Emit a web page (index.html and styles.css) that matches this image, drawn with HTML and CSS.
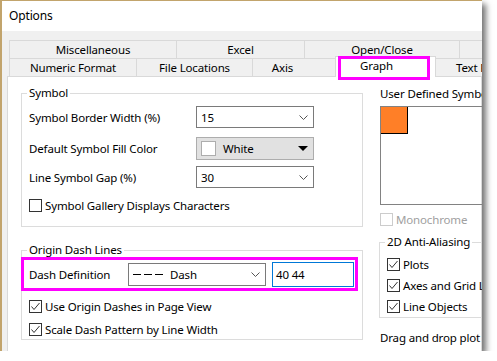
FILE: index.html
```html
<!DOCTYPE html>
<html lang="en">
<head>
    <meta charset="UTF-8">
    <title>Options</title>
    <link rel="stylesheet" href="styles.css">
</head>
<body>
    <div class="window">
        <div class="titlebar">Options</div>

        <div class="dialog">
            <!-- Tab strip, two rows -->
            <div class="tabs">
                <div class="tab-row">
                    <div class="tab tab-misc">Miscellaneous</div>
                    <div class="tab tab-excel">Excel</div>
                    <div class="tab tab-open">Open/Close</div>
                    <div class="tab tab-more"></div>
                </div>
                <div class="tab-row">
                    <div class="tab tab-numeric">Numeric Format</div>
                    <div class="tab tab-files">File Locations</div>
                    <div class="tab tab-axis">Axis</div>
                    <div class="tab tab-graph selected">Graph<span class="callout"></span></div>
                    <div class="tab tab-text">Text Font</div>
                </div>
            </div>

            <div class="panel">
                <div class="col-left">
                    <fieldset class="group group-symbol">
                        <legend>Symbol</legend>
                        <div class="field-row row-border">
                            <span class="field-label">Symbol Border Width (%)</span>
                            <div class="combo">
                                <span class="combo-value">15</span>
                                <svg class="chevron" width="9" height="5" viewBox="0 0 9 5"><polyline points="0.5,0.5 4.5,4.5 8.5,0.5" fill="none" stroke="#555" stroke-width="1"/></svg>
                            </div>
                        </div>
                        <div class="field-row row-fill">
                            <span class="field-label">Default Symbol Fill Color</span>
                            <div class="color-button">
                                <span class="swatch"></span>
                                <span class="color-name">White</span>
                                <svg class="arrow" width="10" height="5" viewBox="0 0 10 5"><polygon points="0,0 10,0 5,5" fill="#000"/></svg>
                            </div>
                        </div>
                        <div class="field-row row-gap">
                            <span class="field-label">Line Symbol Gap (%)</span>
                            <div class="combo">
                                <span class="combo-value">30</span>
                                <svg class="chevron" width="9" height="5" viewBox="0 0 9 5"><polyline points="0.5,0.5 4.5,4.5 8.5,0.5" fill="none" stroke="#555" stroke-width="1"/></svg>
                            </div>
                        </div>
                        <div class="check-row">
                            <span class="checkbox"></span>
                            <span>Symbol Gallery Displays Characters</span>
                        </div>
                    </fieldset>

                    <fieldset class="group group-dash">
                        <legend>Origin Dash Lines</legend>
                        <div class="dash-row">
                            <span class="dash-label">Dash Definition</span>
                            <div class="combo combo-dash">
                                <svg class="dash-preview" width="30" height="3" viewBox="0 0 30 3"><line x1="0" y1="1.5" x2="30" y2="1.5" stroke="#000" stroke-width="1" stroke-dasharray="8 3"/></svg>
                                <span class="combo-value">Dash</span>
                                <svg class="chevron" width="9" height="5" viewBox="0 0 9 5"><polyline points="0.5,0.5 4.5,4.5 8.5,0.5" fill="none" stroke="#555" stroke-width="1"/></svg>
                            </div>
                            <div class="textbox">40 44</div>
                        </div>
                        <div class="check-row row-use">
                            <span class="checkbox"><svg width="11" height="11" viewBox="0 0 11 11"><polyline points="1.5,5.5 4,8.5 9.5,2" fill="none" stroke="#333" stroke-width="1"/></svg></span>
                            <span>Use Origin Dashes in Page View</span>
                        </div>
                        <div class="check-row row-scale">
                            <span class="checkbox"><svg width="11" height="11" viewBox="0 0 11 11"><polyline points="1.5,5.5 4,8.5 9.5,2" fill="none" stroke="#333" stroke-width="1"/></svg></span>
                            <span>Scale Dash Pattern by Line Width</span>
                        </div>
                    </fieldset>
                </div>

                <div class="col-right">
                    <div class="symbols-label">User Defined Symbols</div>
                    <div class="symbols-box">
                        <span class="symbol-cell"></span>
                    </div>
                    <div class="check-row disabled row-mono">
                        <span class="checkbox"></span>
                        <span>Monochrome</span>
                    </div>

                    <fieldset class="group group-aa">
                        <legend>2D Anti-Aliasing</legend>
                        <div class="check-row">
                            <span class="checkbox"><svg width="11" height="11" viewBox="0 0 11 11"><polyline points="1.5,5.5 4,8.5 9.5,2" fill="none" stroke="#333" stroke-width="1"/></svg></span>
                            <span>Plots</span>
                        </div>
                        <div class="check-row">
                            <span class="checkbox"><svg width="11" height="11" viewBox="0 0 11 11"><polyline points="1.5,5.5 4,8.5 9.5,2" fill="none" stroke="#333" stroke-width="1"/></svg></span>
                            <span>Axes and Grid Lines</span>
                        </div>
                        <div class="check-row">
                            <span class="checkbox"><svg width="11" height="11" viewBox="0 0 11 11"><polyline points="1.5,5.5 4,8.5 9.5,2" fill="none" stroke="#333" stroke-width="1"/></svg></span>
                            <span>Line Objects</span>
                        </div>
                    </fieldset>

                    <div class="drag-note">Drag and drop plot settings</div>
                </div>
            </div>
        </div>
    </div>
</body>
</html>
```

FILE: styles.css
```css
body {
    margin: 0;
    background-color: #ffffff;
    font-family: "Noto Sans", "Open Sans", sans-serif;
    font-size: 11.5px;
    letter-spacing: -0.15px;
    color: #000000;
}

.window {
    box-sizing: border-box;
    width: 482px;
    height: 351px;
    border-left: 2px solid #c2a46c;
    border-top: 1px solid #c2a46c;
    background-color: #f0f0f0;
    overflow: hidden;
    box-shadow: 4px 4px 6px rgba(0, 0, 0, 0.55);
    white-space: nowrap;
}

.titlebar {
    height: 30px;
    line-height: 30px;
    padding-left: 7px;
    font-size: 12px;
    background-color: #ffffff;
}

.dialog {
    padding: 9px 0 0 5px;
}

/* Tabs */

.tabs {
    margin-left: 2px;
}

.tab-row {
    display: flex;
    height: 18px;
}

.tab {
    box-sizing: border-box;
    flex-shrink: 0;
    height: 18px;
    line-height: 18px;
    border: 1px solid #d9d9d9;
    border-bottom: none;
    margin-right: -1px;
    text-align: center;
    background-color: #f0f0f0;
}

.tab-misc { width: 168px; }
.tab-excel { width: 129px; }
.tab-open { width: 156px; }
.tab-more { width: 60px; }

.tab-numeric { width: 128px; }
.tab-files { width: 117px; }
.tab-axis { width: 85px; padding-right: 24px; }
.tab-graph { width: 101px; }
.tab-text { width: 80px; text-align: left; padding-left: 20px; }

.tab.selected {
    position: relative;
    z-index: 1;
    height: 21px;
    margin-top: -2px;
    margin-left: -1px;
    line-height: 17px;
    padding-right: 18px;
    background-color: #ffffff;
}

.callout {
    position: absolute;
    left: 2px;
    top: -1px;
    width: 92px;
    height: 24px;
    box-sizing: border-box;
    border: 3px solid #ff00ff;
}

/* Page */

.panel {
    display: flex;
    gap: 17px;
    height: 300px;
    margin-top: 0;
    padding: 8px 0 0 13px;
    border: 1px solid #d9d9d9;
    background-color: #ffffff;
}

.col-left {
    width: 342px;
    flex-shrink: 0;
}

.col-right {
    width: 140px;
    flex-shrink: 0;
}

.group {
    margin: 0;
    padding: 5px 0 10px 7px;
    border: 1px solid #dcdcdc;
    min-width: 0;
}

.group legend {
    padding: 0 2px;
    margin-left: -2px;
    line-height: 16px;
}

.field-row {
    display: flex;
    align-items: center;
}

.field-label {
    width: 167px;
}

.row-border {
    margin-bottom: 9px;
}

.row-fill {
    margin-bottom: 6px;
}

.row-gap {
    margin-bottom: 6px;
}

.combo {
    box-sizing: border-box;
    display: flex;
    align-items: center;
    width: 118px;
    height: 22px;
    padding: 0 5px 0 4px;
    border: 1px solid #7a7a7a;
    background-color: #ffffff;
}

.combo-value {
    flex-grow: 1;
}

.color-button {
    box-sizing: border-box;
    display: flex;
    align-items: center;
    width: 118px;
    height: 23px;
    padding: 0 5px 0 4px;
    border: 1px solid #adadad;
    background-color: #e1e1e1;
}

.swatch {
    box-sizing: border-box;
    width: 15px;
    height: 15px;
    border: 1px solid #adadad;
    background-color: #ffffff;
    margin-right: 7px;
}

.color-name {
    flex-grow: 1;
}

.check-row {
    display: flex;
    align-items: center;
    height: 22px;
}

.checkbox {
    box-sizing: border-box;
    display: flex;
    align-items: center;
    justify-content: center;
    width: 13px;
    height: 13px;
    margin-right: 3px;
    border: 1px solid #333333;
    background-color: #ffffff;
}

.check-row.disabled {
    color: #a0a0a0;
}

.check-row.disabled .checkbox {
    border-color: #cccccc;
}

/* Dash lines group */

.group-dash {
    margin-top: 15px;
    padding: 0 0 0 7px;
}

.dash-row {
    box-sizing: border-box;
    display: flex;
    align-items: center;
    width: 337px;
    height: 34px;
    margin: -1px 0 0 -8px;
    padding-left: 5px;
    border: 3px solid #ff00ff;
}

.dash-label {
    width: 99px;
}

.combo-dash {
    width: 138px;
    height: 23px;
}

.dash-preview {
    margin-right: 7px;
}

.textbox {
    box-sizing: border-box;
    width: 82px;
    height: 25px;
    margin-left: 6px;
    padding-left: 3px;
    line-height: 23px;
    border: 1px solid #0078d7;
}

.row-use {
    height: 20px;
    margin-top: 5px;
}

.row-scale {
    height: 20px;
    margin-top: 3px;
}

/* Right column */

.symbols-label {
    margin-top: 1px;
    line-height: 16px;
}

.symbols-box {
    box-sizing: border-box;
    width: 140px;
    height: 99px;
    margin-top: 4px;
    border: 1px solid #828282;
}

.symbol-cell {
    display: block;
    box-sizing: border-box;
    width: 27px;
    height: 27px;
    border-right: 1px solid #000000;
    border-bottom: 1px solid #000000;
    background-color: #ff7f27;
}

.row-mono {
    height: 20px;
    margin-top: 4px;
}

.group-aa {
    margin: 5px 0 0 -1px;
    padding: 4px 0 0 7px;
}

.group-aa .check-row {
    height: 21px;
}

.drag-note {
    margin-top: 12px;
    line-height: 16px;
}
```
